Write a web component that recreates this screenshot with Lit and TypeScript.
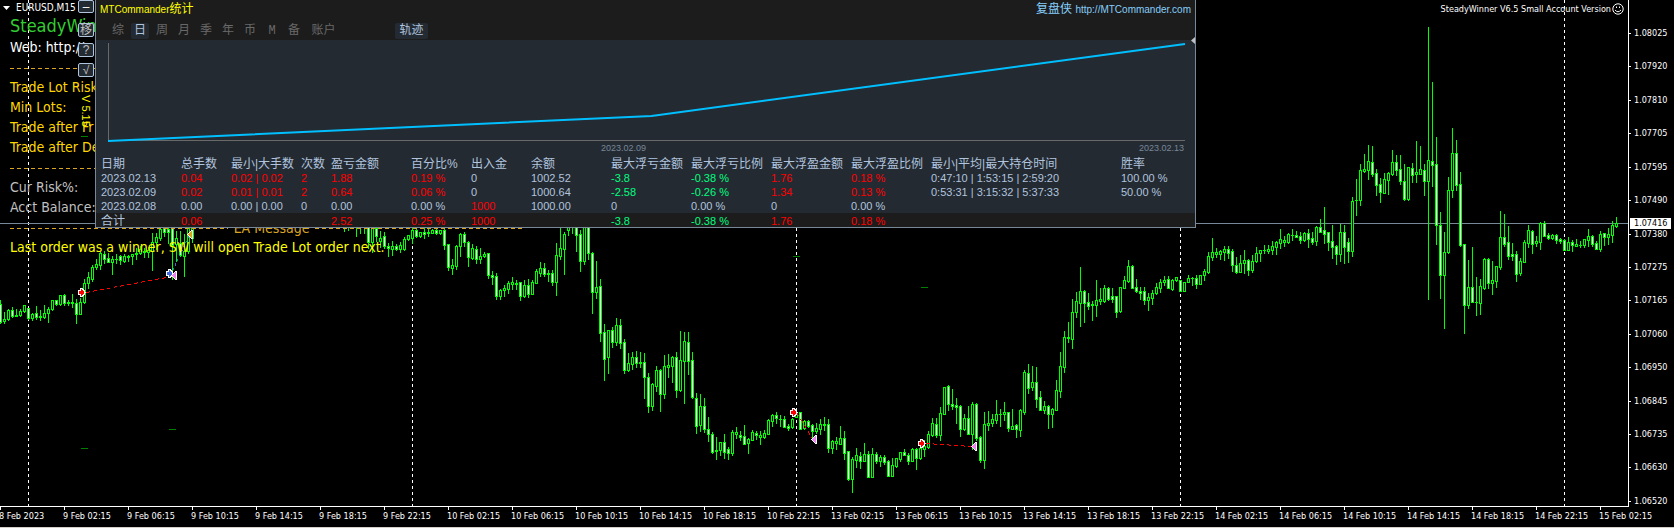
import { LitElement, html, css, svg } from "lit";
import { customElement, state } from "lit/decorators.js";
import { classMap } from "lit/directives/class-map.js";

type Bar = [number, number, number, number];

/* Bars as "high open close low", in chart pixels measured downwards. */
const parse = (text: string): Bar[] =>
  text.trim().split(/\s*,\s*/).map((b) => b.split(" ").map(Number) as Bar);

const PITCH = 4;

const RUNS: { from: number; bars: Bar[] }[] = [
  {
    from: 0,
    bars: parse(`300 304 322 323,312 321 319 323,309 319 310 320,307 310 316 317,309 315 316 316,309 315 311 316,305 311 305 312,
308 308 318 319,313 318 314 320,306 313 317 319,310 316 317 320,305 317 313 318,307 313 309 322,300 309 300 310,300 300 304 305,
295 304 295 305,294 295 303 305,300 303 302 305,294 303 302 307,299 303 314 323,298 314 302 314,279 302 283 303,272 283 277 288,
265 279 267 281,259 267 264 269,252 265 253 269,251 254 259 263,253 258 262 262,256 262 259 274,254 259 259 263,255 256 260 264,
254 261 256 262,255 257 256 261,254 256 254 264,248 254 253 259,246 253 249 254,248 252 251 257,247 252 250 257,233 251 242 270,
233 242 237 249,220 238 229 240,220 222 232 236,220 229 232 243,220 222 245 279,231 244 238 261,231 243 255 256,234 256 251 276,
220 251 228 253,220 238 222 242`),
  },
  {
    from: 86,
    bars: parse(`220 222 225 231,220 222 225 230,220 222 225 226,220 222 225 236,220 222 225 233,220 222 225 233,220 222 242 248,
220 242 224 252,220 228 236 241,231 241 238 247,232 236 246 248,243 246 248 256,241 249 246 255,244 246 249 250,242 249 245 252,
237 249 239 250,235 239 235 240,228 238 230 243,228 230 236 237,232 236 232 237,228 232 234 238,228 233 232 236,229 233 230 233,
229 230 233 234,230 233 230 234,229 230 245 249,244 244 267 270,259 268 265 274,245 266 246 269,233 246 234 256,232 234 242 246,
241 242 257 266,244 258 248 259,246 249 259 263,248 259 256 263,252 256 254 257,253 253 275 278,271 275 277 284,273 276 296 299,
289 296 290 299,285 290 288 296,281 289 283 293,277 284 282 289,280 284 283 289,282 282 296 300,280 296 285 297,279 285 294 297,
280 294 282 294,269 283 271 283,262 273 268 276,263 268 274 276,270 274 273 281,270 273 282 285,243 282 255 295,220 256 248 259,
232 249 234 274,220 230 222 235,220 224 222 233,220 221 235 251,230 234 261 271,220 261 222 264,220 220 253 259,252 253 292 313,
261 292 287 298,279 286 333 341,324 332 359 380,330 357 330 373,327 330 342 347,318 342 325 345,319 325 343 348,339 342 370 373,
353 370 363 371,352 364 357 369,351 357 363 367,352 363 362 367,353 362 377 398,373 377 406 412,383 406 384 410,366 386 370 391,
369 370 394 411,355 394 366 398,354 367 365 377,356 366 357 382,352 357 390 397,331 390 360 391,332 361 341 403,332 342 361 374,
352 360 397 398,393 398 426 433,394 425 406 431,398 406 429 432,417 429 434 441,432 434 452 453,437 451 450 459,442 450 442 455,
434 442 452 458,447 449 453 459,430 453 432 455,427 434 432 438,431 435 437 440,425 436 444 444,438 443 439 453,430 440 432 440,
431 433 435 439,431 437 435 444,430 437 433 438,419 434 420 434,414 421 415 426,412 415 418 423,415 419 419 426,416 419 427 427,
424 426 428 430,418 427 419 428,410 417 412 417,412 412 429 429,420 428 421 429,420 421 426 427,424 425 431 438,423 431 428 433,
419 429 424 434,417 425 424 430,419 424 448 452,440 448 441 453,437 443 441 449,426 444 438 444,431 438 453 459,451 451 479 480,
457 479 459 492,448 460 455 467,452 456 461 468,443 461 454 461,451 454 477 477,448 477 454 477,452 454 461 463,455 461 457 466,
455 457 462 464,460 461 476 476,458 476 465 476,458 466 458 467,452 459 452 461,449 452 455 455,453 455 461 464,448 461 449 461,
448 449 458 469,443 458 448 459,440 449 446 456,431 447 434 448,418 435 423 436,418 424 435 437,407 435 413 440,387 414 387 414,
385 386 404 410,389 404 406 409,398 405 407 423,405 406 429 436,414 429 418 430,406 418 434 434,402 434 404 449,403 404 438 440,
436 437 460 462,412 460 424 468,411 425 423 430,414 423 419 426,400 420 414 423,409 414 414 426,402 414 412 420,412 412 428 431,
409 429 426 429,424 425 429 437,409 430 410 436,370 412 372 414,364 373 388 393,366 387 382 390,367 382 399 407,391 397 410 410,
401 410 406 413,405 406 414 428,408 414 409 427,380 410 390 410,352 391 366 397,331 367 337 372,322 338 337 342,299 339 312 348,
292 312 301 317,267 303 291 326,290 291 303 322,293 302 306 309,301 305 304 320,280 305 300 316,288 301 299 304,285 301 288 302,
287 288 299 300,288 296 299 302,296 296 312 317,287 311 287 312,276 288 280 288,260 281 266 282,265 266 288 288,279 287 291 292,
287 291 293 299,287 291 300 304,293 300 297 310,290 298 293 304,283 293 287 294,279 288 282 292,276 282 280 285,276 279 288 288,
279 289 280 290,277 280 277 281,280 280 291 291,282 291 282 291,275 282 278 282,277 278 278 285,275 278 284 288,275 284 275 284,
269 275 271 280,252 272 256 273,238 257 252 260,248 254 252 257,250 254 251 259,246 252 249 260,246 249 253 258,249 251 265 271,
257 265 272 273,255 272 263 272,250 263 260 273,259 260 270 275,255 270 261 272,247 261 253 262,250 253 250 261,245 250 250 253,
245 251 249 253,241 250 246 254,241 247 242 254,229 243 239 248,236 242 240 246,233 242 234 243,229 235 235 240,231 235 237 237,
232 236 240 243,232 240 233 241,229 233 239 247,232 238 242 244,226 241 227 245,219 227 232 232,207 230 234 243,232 232 242 250,
225 241 247 258,245 246 254 264,224 254 232 261,225 232 247 263,238 242 251 262,197 251 201 256,179 200 200 215,164 200 170 205,
154 171 169 172,145 170 161 179,146 162 174 176,169 173 185 195,178 184 192 202,173 193 179 193,172 180 173 194,150 174 162 175,
155 162 170 175,155 169 181 184,164 181 199 200,167 199 167 200,163 168 175 182,141 174 172 182,146 174 169 174,164 170 181 195,
27 181 160 299,82 161 165 186,137 164 225 244,212 225 275 298,232 275 252 328,177 252 190 253,128 190 153 197,140 153 185 190,
172 184 245 246,244 244 305 333,260 305 287 308,247 287 302 302,277 302 302 315,279 303 286 314,258 288 259 289,258 259 283 288,
261 283 280 294,266 281 266 287,211 267 237 269,214 237 244 246,226 242 256 259,243 254 256 260,251 254 274 281,258 273 261 275,
240 262 242 262,225 243 230 247,230 231 244 253,236 243 241 246,222 242 223 249,221 223 236 236,233 235 238 239,234 238 235 239,
234 235 240 243,238 239 241 243,239 240 250 250,237 250 242 250,240 242 245 251,239 246 244 246,241 245 245 247,239 245 239 247,
229 240 236 246,235 236 244 246,241 243 249 249,231 249 234 251,233 233 237 245,228 237 234 244,221 235 225 242,217 226 223 227`),
  },
];

const DAY_LINES = [28, 412, 796, 1180, 1564];
const LEVEL_MARKS = [[81, 136], [169, 429], [81, 448], [793, 256], [921, 287]];
const ENTRIES = [
  { x: 78, y: 288, color: "#ff0000" },
  { x: 166, y: 269, color: "#4169e1" },
  { x: 790, y: 408, color: "#ff0000" },
  { x: 918, y: 439, color: "#ff0000" },
];
const EXITS = [
  { x: 170, y: 271, color: "#ee82ee" },
  { x: 186, y: 230, color: "#daa520" },
  { x: 810, y: 435, color: "#ee82ee" },
  { x: 970, y: 442, color: "#ee82ee" },
];
const PRICES = [
  "1.08025", "1.07920", "1.07810", "1.07705", "1.07595", "1.07490", "1.07380", "1.07275",
  "1.07165", "1.07060", "1.06950", "1.06845", "1.06735", "1.06630", "1.06520",
];
const HOURS = ["02:15", "06:15", "10:15", "14:15", "18:15", "22:15"];
const TIMES = [
  "8 Feb 2023",
  ...["9", "10", "13", "14"].flatMap((d) => HOURS.map((h) => `${d} Feb ${h}`)),
  "15 Feb 02:15",
];

@customElement("price-chart")
class PriceChart extends LitElement {
  static styles = css`
    :host { display: block; height: 100%; }
    svg { display: block; width: 100%; height: 100%; }
    .day { stroke: #fff; stroke-dasharray: 3 3; }
    .bid { stroke: #778899; }
    .bull { fill: #000; }
    .bear { fill: #fff; }
    .frame { fill: #0f0; }
    .level { stroke: #008000; }
    .trade { stroke: #f00; stroke-dasharray: 4 3; }
    .gain { stroke: #4169e1; stroke-dasharray: 2 3; }
    .outline { fill: #fff; }
  `;

  private paths() {
    let frame = "";
    let bull = "";
    let bear = "";
    for (const run of RUNS) {
      run.bars.forEach(([high, open, close, low], i) => {
        const x = (run.from + i) * PITCH;
        const top = Math.min(open, close);
        const bottom = Math.max(open, close);
        frame += `M${x} ${high}h1V${low + 1}h-1zM${x - 1} ${top}h3V${bottom + 1}h-3z`;
        if (bottom - top > 1) {
          const inner = `M${x} ${top + 1}h1V${bottom}h-1z`;
          if (close > open) bear += inner;
          else bull += inner;
        }
      });
    }
    return { frame, bull, bear };
  }

  render() {
    const p = this.paths();
    return html`<svg shape-rendering="crispEdges" role="img" aria-label="EURUSD M15">
      ${DAY_LINES.map((x) => svg`<line class="day" x1=${x + 0.5} x2=${x + 0.5} y1="0" y2="100%" />`)}
      <line class="bid" x1="0" x2="100%" y1="223.5" y2="223.5" />
      <path class="frame" fill-rule="nonzero" d=${p.frame} />
      <path class="bull" d=${p.bull} />
      <path class="bear" d=${p.bear} />
      ${LEVEL_MARKS.map(([x, y]) => svg`<path class="level" d="M${x} ${y + 0.5}h7" />`)}
      <path class="trade" d="M86 292.5L169 277M797 413L812 438M926 443.500L972 446.500" />
      <path class="gain" d="M173 270L189 236" />
      ${ENTRIES.map(
        (e) => svg`<g transform="translate(${e.x} ${e.y})">
          <path class="outline" d="M2 0h3v1h1v1h1v2h1v1h-1v2h-1v1h-1v1h-3v-2h-2v-5h2z" />
          <path fill=${e.color} d="M3 1h1v1h1v1h1v3h-1v1h-1v1h-1v-2h-2v-3h2z" />
        </g>`,
      )}
      ${EXITS.map(
        (e) => svg`<g transform="translate(${e.x} ${e.y})">
          <path class="outline" d="M7 0v9h-2v-1h-1v-1h-1v-1h-1v-1h-1v-1h1v-1h1v-1h1v-1h1v-1z" />
          <path fill=${e.color} d="M6 1v7h-1v-1h-1v-1h-1v-1h-1v-1h1v-1h1v-1h1v-1z" />
        </g>`,
      )}
    </svg>`;
  }
}

@customElement("ea-notes")
class EaNotes extends LitElement {
  static styles = css`
    :host { display: block; font: 14px/18px "DejaVu Sans Condensed", Verdana, sans-serif; white-space: nowrap; }
    p { margin: 0; padding-left: 10px; height: 20px; }
    .symbol { display: flex; align-items: center; gap: 6px; height: 16px; padding-left: 3px;
      font-size: 10px; line-height: 16px; color: #fff; }
    .symbol svg { width: 7px; height: 4px; fill: #fff; }
    .name { height: 22px; font-size: 18px; line-height: 20px; color: #32cd32; }
    .web { color: #fff; }
    .gold { color: #ffd700; }
    .grey { color: #c0c0c0; }
    .last { color: #ff0; }
    .rule { display: flex; align-items: center; gap: 6px; color: #daa520; width: 515px; }
    .rule i { flex: 216; height: 1px;
      background: repeating-linear-gradient(90deg, #daa520 0 4px, transparent 4px 7px); }
    .rule i:last-child { flex: 208; }
  `;

  render() {
    return html`
      <p class="symbol"><svg viewBox="0 0 7 4"><path d="M0 0h7L3.500 4z" /></svg>EURUSD,M15</p>
      <p class="name">SteadyWinner</p>
      <p class="web">Web: http://</p>
      <p class="rule"><i></i></p>
      <p class="gold">Trade Lot Risk</p>
      <p class="gold">Min Lots:</p>
      <p class="gold">Trade after Fr</p>
      <p class="gold">Trade after De</p>
      <p class="rule"><i></i></p>
      <p class="grey">Cur Risk%:</p>
      <p class="grey">Acct Balance:</p>
      <p class="rule"><i></i><span>EA Message</span><i></i></p>
      <p class="last">Last order was a winner, SW will open Trade Lot order next.</p>
    `;
  }
}

const COLUMNS = [
  { label: "日期", width: 80 },
  { label: "总手数", width: 50 },
  { label: "最小|大手数", width: 70 },
  { label: "次数", width: 30 },
  { label: "盈亏金额", width: 80 },
  { label: "百分比%", width: 60 },
  { label: "出入金", width: 60 },
  { label: "余额", width: 80 },
  { label: "最大浮亏金额", width: 80 },
  { label: "最大浮亏比例", width: 80 },
  { label: "最大浮盈金额", width: 80 },
  { label: "最大浮盈比例", width: 80 },
  { label: "最小|平均|最大持仓时间", width: 190 },
  { label: "胜率", width: 0 },
];

/* A leading "+" marks a value shown in red, a leading "-" one shown in green. */
const ROWS = [
  ["2023.02.13", "+0.04", "+0.02 | 0.02", "+2", "+1.88", "+0.19 %", "0", "1002.52", "-3.8", "-0.38 %", "+1.76", "+0.18 %", "0:47:10 | 1:53:15 | 2:59:20", "100.00 %"],
  ["2023.02.09", "+0.02", "+0.01 | 0.01", "+2", "+0.64", "+0.06 %", "0", "1000.64", "-2.58", "-0.26 %", "+1.34", "+0.13 %", "0:53:31 | 3:15:32 | 5:37:33", "50.00 %"],
  ["2023.02.08", "0.00", "0.00 | 0.00", "0", "0.00", "0.00 %", "+1000", "1000.00", "0", "0.00 %", "0", "0.00 %", "", ""],
];
const TOTAL = ["合计", "+0.06", "", "", "+2.52", "+0.25 %", "+1000", "", "-3.8", "-0.38 %", "+1.76", "+0.18 %", "", ""];

@customElement("stats-panel")
class StatsPanel extends LitElement {
  static styles = css`
    :host { display: block; box-sizing: border-box; border: 1px solid #778899; border-top: 0;
      background: #242a32; color: #b0c4de;
      font: 11px/14px "Liberation Sans", "Noto Sans CJK SC", sans-serif; }
    header { height: 40px; background: #1c1c1c; }
    .top { display: flex; justify-content: space-between; padding: 0 4px; height: 18px;
      font-size: 12px; line-height: 18px; }
    .latin { font-size: 10px; }
    .title { color: #ff0; margin: 0; font: inherit; }
    .site { color: #87cefa; text-decoration: none; }
    nav { display: flex; gap: 4px; padding: 5px 13px 1px; }
    button { width: 18px; height: 16px; padding: 1px 0 0; border: 0; border-radius: 2px; background: none;
      color: #696969; font: 12px/15px "Liberation Mono", "Noto Sans CJK SC", monospace; white-space: nowrap; }
    .wide { width: 33px; }
    .track { margin-left: 51px; }
    .active { background: #242a32; color: #b0c4de; }
    .plot { display: block; box-sizing: border-box; height: 101px; padding: 0 10px 0 12px; width: 100%; overflow: visible; }
    .axis { fill: none; stroke: #696969; shape-rendering: crispEdges; }
    .equity { fill: none; stroke: #00bfff; stroke-width: 2; }
    path { vector-effect: non-scaling-stroke; }
    .dates { display: grid; grid-template-columns: 1fr 1fr; margin: 0 11px 0 12px; padding-top: 1px;
      height: 14px; font-size: 9px; line-height: 12px; color: #778899; text-align: right; }
    table { width: 100%; table-layout: fixed; border-collapse: collapse; }
    th, td { height: 14px; padding: 0 0 0 5px; font-weight: normal; text-align: left; white-space: nowrap; }
    th { font-size: 12px; line-height: 14px; }
    thead th { height: 13px; padding-top: 2px; line-height: 13px; }
    td { line-height: 14px; }
    tfoot { background: #1c1c1c; }
    tfoot th, tfoot td { height: 12px; padding-top: 2px; line-height: 12px; }
    .up { color: #f00; }
    .down { color: #00ff7f; }
  `;

  @state() private tab = "日";

  private cell(v: string) {
    const up = v.startsWith("+");
    return html`<td class=${classMap({ up, down: v.startsWith("-") })}>${up ? v.slice(1) : v}</td>`;
  }

  render() {
    return html`
      <header>
        <div class="top">
          <h1 class="title"><span class="latin">MTCommander</span>统计</h1>
          <a class="site" href="http://MTCommander.com">复盘侠 <span class="latin">http://MTCommander.com</span></a>
        </div>
        <nav>
          ${["综", "日", "周", "月", "季", "年", "币", "M", "备", "账户"].map(
            (t) => html`<button
              class=${classMap({ active: t === this.tab, wide: t.length > 1 })}
              @click=${() => (this.tab = t)}
            >${t}</button>`,
          )}
          <button class="wide track active">轨迹</button>
        </nav>
      </header>
      <svg class="plot" viewBox="0 0 1076 101" preserveAspectRatio="none">
        <path class="axis" d="M0.500 3V100.500H1076" />
        <path class="equity" d="M0 101L543 76L1076 4" />
      </svg>
      <div class="dates"><span>2023.02.09</span><span>2023.02.13</span></div>
      <table>
        <colgroup>
          ${COLUMNS.map((c) => (c.width ? html`<col width=${c.width} />` : html`<col />`))}
        </colgroup>
        <thead><tr>${COLUMNS.map((c) => html`<th scope="col">${c.label}</th>`)}</tr></thead>
        <tbody>${ROWS.map((r) => html`<tr>${r.map((v) => this.cell(v))}</tr>`)}</tbody>
        <tfoot><tr><th scope="row">${TOTAL[0]}</th>${TOTAL.slice(1).map((v) => this.cell(v))}</tr></tfoot>
      </table>
    `;
  }
}

@customElement("app-root")
class AppRoot extends LitElement {
  static styles = css`
    :host { display: grid; grid-template-columns: minmax(0, 1fr) 46px; grid-template-rows: 1fr 21px;
      min-height: 100vh; background: #000; color: #fff; overflow: hidden;
      font: 9px/11px "DejaVu Sans Condensed", Tahoma, sans-serif; }
    .chart { position: relative; border-bottom: 1px solid #fff; overflow: hidden; }
    price-chart { position: absolute; inset: 0; }
    ea-notes { position: relative; }
    stats-panel { position: absolute; top: 0; left: 95px; right: 432px; }
    .tools { position: absolute; top: 0; left: 78px; display: flex; flex-direction: column; gap: 6px; align-items: center; }
    .tools button { box-sizing: border-box; width: 16px; height: 14px; padding: 0; border: 1px solid #b0c4de; border-radius: 2px;
      background: #242a32; color: #c0c0c0; font: 12px/12px "Liberation Sans", "Noto Sans CJK SC", sans-serif; }
    .tools .fold { height: 13px; margin-bottom: 4px; line-height: 8px; color: #fff; }
    .version { writing-mode: vertical-rl; margin-top: 12px; font: 11px/14px "Liberation Sans", sans-serif; color: #ff0; }
    .grip { position: absolute; top: 37px; right: 433px; width: 4px; height: 7px; fill: #c0c0c0; }
    .expert { position: absolute; top: 3px; right: 4px; display: flex; align-items: center; gap: 1px; line-height: 12px; }
    .expert svg { width: 12px; height: 12px; fill: none; stroke: #fff; }
    .prices { position: relative; box-sizing: border-box; border-left: 1px solid #fff; height: 507px; padding: 28px 0 0;
      display: flex; flex-direction: column; justify-content: space-between; }
    .prices span { display: flex; align-items: center; gap: 3px; }
    .prices span::before { content: ""; width: 2px; height: 1px; background: #fff; }
    .bid { position: absolute; top: 218px; left: 1px; right: 3px; padding-left: 4px; background: #fff; color: #000; }
    .times { grid-column: 1 / -1; display: flex; margin-left: -1px; border-bottom: 1px solid #d4d0c8; overflow: hidden; }
    .times span { flex: 0 0 64px; white-space: nowrap; line-height: 12px; }
    .times span::before { content: ""; display: block; width: 1px; height: 3px; margin-left: 1px; background: #fff; }
  `;

  @state() private open = true;

  render() {
    return html`
      <main class="chart">
        <price-chart></price-chart>
        <ea-notes></ea-notes>
        <div class="tools">
          <button class="fold" aria-label="Fold" @click=${() => (this.open = !this.open)}>–</button>
          <button>移</button>
          <button>?</button>
          <button>√</button>
          <span class="version">V 5.15</span>
        </div>
        ${this.open
          ? html`<stats-panel></stats-panel>
              <svg class="grip" viewBox="0 0 4 7"><path d="M4 0v7L0 3.500z" /></svg>`
          : null}
        <div class="expert">
          SteadyWinner V6.5 Small Account Version
          <svg viewBox="0 0 12 12">
            <circle cx="6" cy="6" r="5.200" />
            <path d="M3 7q3 3.500 6 0M4.500 3.500v1.500M7.500 3.500v1.500" />
          </svg>
        </div>
      </main>
      <aside class="prices">
        ${PRICES.map((p) => html`<span>${p}</span>`)}
        <div class="bid">1.07416</div>
      </aside>
      <footer class="times">${TIMES.map((t) => html`<span>${t}</span>`)}</footer>
    `;
  }
}
